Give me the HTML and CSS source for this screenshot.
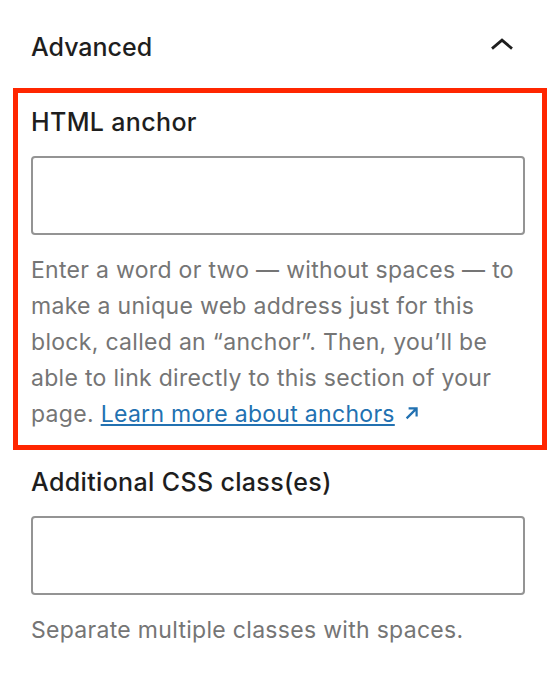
FILE: index.html
```html
<!DOCTYPE html>
<html lang="en">
<head>
<meta charset="utf-8">
<title>Block settings — Advanced</title>
<link rel="stylesheet" href="styles.css">
</head>
<body>
<div class="panel">
  <div class="panel-header">
    <h2 class="panel-title">Advanced</h2>
    <svg class="panel-toggle" width="22" height="12" viewBox="0 0 22 12" aria-hidden="true">
      <polyline points="1,10.6 11,2.2 21,10.6" />
    </svg>
  </div>

  <div class="field field--highlight">
    <label class="field-label" for="html-anchor">HTML anchor</label>
    <input class="field-input" id="html-anchor" type="text">
    <p class="field-help">Enter a word or two — without spaces — to make a unique web address just for this block, called an “anchor”. Then, you’ll be able to link directly to this section of your page. <a class="external-link" href="#">Learn more about anchors</a><svg class="external-link-icon" width="14" height="14" viewBox="0 0 14 14" aria-hidden="true"><path d="M1.6 12.4 L11.6 2.4 M3.6 2.4 H11.6 V10.4" /></svg></p>
  </div>

  <div class="field field--plain">
    <label class="field-label" for="css-classes">Additional CSS class(es)</label>
    <input class="field-input" id="css-classes" type="text">
    <p class="field-help">Separate multiple classes with spaces.</p>
  </div>
</div>
</body>
</html>
```

FILE: styles.css
```css
* {
  box-sizing: border-box;
}

html,
body {
  margin: 0;
  padding: 0;
  background: #ffffff;
}

body {
  font-family: Inter, "Noto Sans", "Liberation Sans", sans-serif;
  color: #1e1e1e;
}

.panel {
  width: 558px;
}

/* collapsible panel header */
.panel-header {
  display: flex;
  align-items: center;
  justify-content: space-between;
  padding: 31px 45px 0 31px;
}

.panel-title {
  margin: 0;
  font-size: 25px;
  line-height: 32px;
  font-weight: 500;
  color: #1e1e1e;
}

.panel-toggle {
  display: block;
  margin-bottom: 7px;
}

.panel-toggle polyline {
  fill: none;
  stroke: #1e1e1e;
  stroke-width: 2.8;
}

/* form fields */
.field {
  display: flex;
  flex-direction: column;
}

.field--highlight {
  margin: 25px 11px 0 13px;
  border: 5px solid #ff2600;
  padding: 13px 17px 13px 13px;
}

.field--plain {
  margin: 16px 33px 0 31px;
}

.field-label {
  display: block;
  font-size: 25px;
  line-height: 32px;
  font-weight: 500;
  letter-spacing: 0.35px;
  color: #1e1e1e;
  margin-bottom: 18px;
}

.field-input {
  display: block;
  width: 100%;
  height: 79px;
  margin: 0;
  padding: 0 16px;
  border: 2px solid #949494;
  border-radius: 4px;
  background: #ffffff;
  font: inherit;
  outline: none;
}

.field-help {
  margin: 17px 0 0;
  font-size: 23px;
  line-height: 36px;
  letter-spacing: 0.3px;
  color: #757575;
}

.external-link {
  color: #2271b1;
  text-decoration: underline;
  text-decoration-thickness: 2px;
  text-underline-offset: 2px;
}

.external-link-icon {
  margin-left: 10px;
  vertical-align: 2px;
}

.external-link-icon path {
  fill: none;
  stroke: #2271b1;
  stroke-width: 2.2;
}
```
